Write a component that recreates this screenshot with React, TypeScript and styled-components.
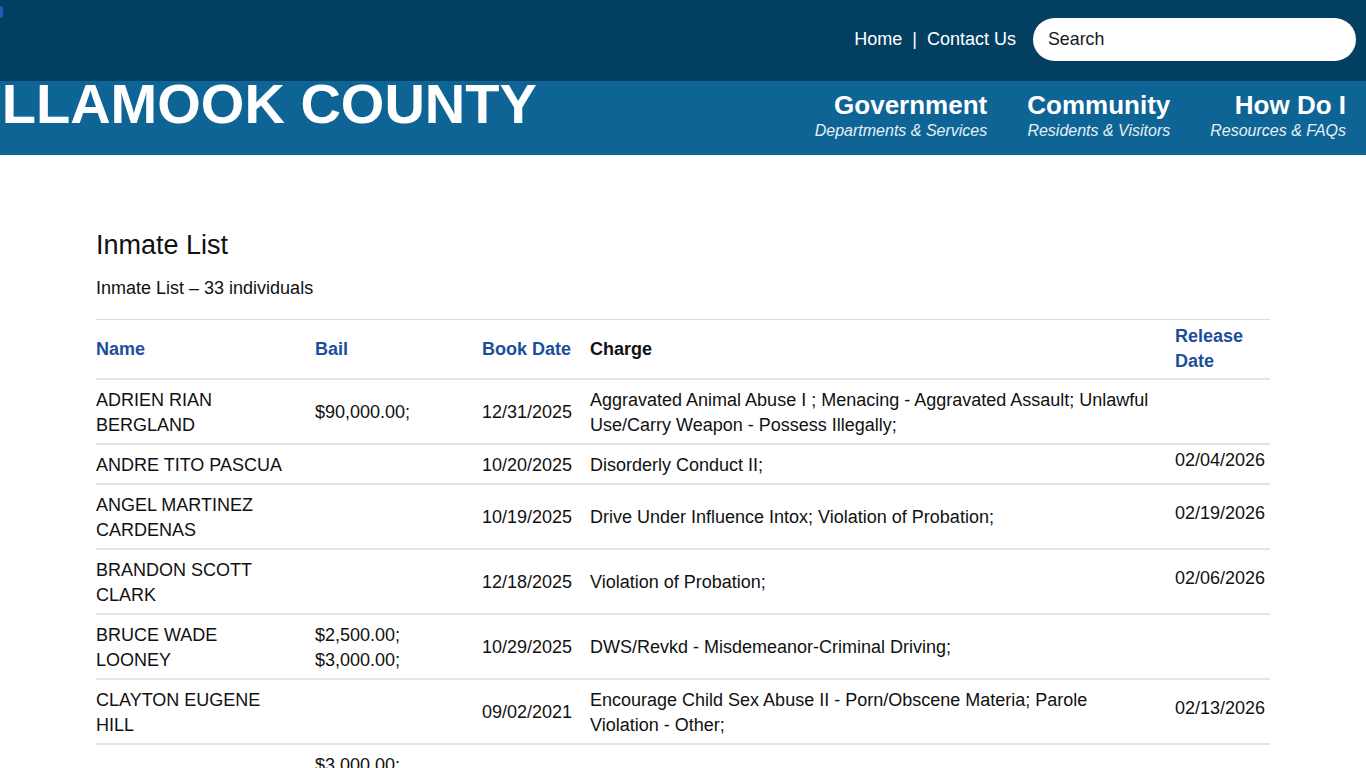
import React from "react";
import styled, { createGlobalStyle } from "styled-components";

const Global = createGlobalStyle`
  html, body { margin: 0; padding: 0; background: #ffffff; }
  body { font-family: "Liberation Sans", Arial, sans-serif; color: #111; }
  * { box-sizing: border-box; }
`;

const Page = styled.div`
  position: relative;
  width: 100%;
  min-height: 768px;
`;

const SkipMark = styled.span`
  position: absolute;
  left: 0;
  top: 6px;
  width: 3px;
  height: 12px;
  border-radius: 0 3px 3px 0;
  background: #2456c9;
  filter: blur(0.6px);
`;

const TopBar = styled.div`
  height: 81px;
  background: #033f61;
  display: flex;
  align-items: center;
  justify-content: flex-end;
  padding-right: 10px;
  gap: 17px;
`;

const Utility = styled.nav`
  display: flex;
  align-items: center;
  gap: 9px;
  font-size: 18px;
  color: #ffffff;
  margin-top: -3px;
`;

const UtilLink = styled.a`
  color: #ffffff;
  text-decoration: none;
`;

const Sep = styled.span`
  color: #ffffff;
  padding: 0 1px;
`;

const SearchBox = styled.div`
  width: 323px;
  height: 43px;
  border-radius: 22px;
  background: #ffffff;
  display: flex;
  align-items: center;
  padding-left: 15px;
  font-size: 17.8px;
  color: #1a1a1a;
  margin-top: -2px;
`;

const Band = styled.div`
  height: 74px;
  background: #0e6595;
  display: flex;
  align-items: flex-start;
  justify-content: space-between;
  overflow: hidden;
  padding-right: 20px;
`;

const Logo = styled.div`
  font-size: 56px;
  line-height: 56px;
  font-weight: 700;
  color: #ffffff;
  white-space: nowrap;
  margin-left: -48px;
  margin-top: -5px;
`;

const MainNav = styled.nav`
  display: flex;
  gap: 40px;
  padding-top: 10px;
`;

const NavItem = styled.a`
  display: flex;
  flex-direction: column;
  align-items: flex-end;
  text-decoration: none;
  color: #ffffff;
`;

const NavTitle = styled.span`
  font-size: 26px;
  line-height: 29px;
  font-weight: 700;
`;

const NavSub = styled.span`
  font-size: 16px;
  line-height: 22px;
  font-style: italic;
  color: #e6eff6;
`;

const Main = styled.main`
  width: 1174px;
  margin: 0 auto;
  padding-top: 74px;
`;

const Title = styled.h1`
  margin: 0;
  font-size: 27px;
  line-height: 32px;
  font-weight: 400;
  color: #111;
`;

const Summary = styled.p`
  margin: 15px 0 18px;
  font-size: 18px;
  line-height: 25px;
  color: #111;
`;

const Table = styled.table`
  width: 100%;
  table-layout: fixed;
  border-collapse: collapse;
  border-top: 1px solid #dedede;
  font-size: 18px;
  line-height: 25px;
`;

type Col = "name" | "bail" | "book" | "charge" | "release";

const padRight: Record<Col, number> = {
  name: 28,
  bail: 18,
  book: 12,
  charge: 22,
  release: 4,
};

const Row = styled.tr`
  border-bottom: 2px solid #e4e4e4;
`;

const Th = styled.th<{ $col: Col; $sortable?: boolean }>`
  text-align: left;
  vertical-align: middle;
  font-weight: 700;
  padding: 4px ${(p) => padRight[p.$col]}px 4px 0;
  color: ${(p) => (p.$sortable ? "#1b4f9c" : "#111")};
`;

const Td = styled.td<{ $col: Col }>`
  text-align: left;
  vertical-align: middle;
  color: #111;
  padding: ${(p) => (p.$col === "release" ? "3px" : "7.5px")}
    ${(p) => padRight[p.$col]}px
    ${(p) => (p.$col === "release" ? "10px" : "5.5px")} 0;
  white-space: ${(p) => (p.$col === "book" || p.$col === "release" ? "nowrap" : "normal")};
`;

const BailLine = styled.span`
  display: block;
`;

type Inmate = {
  name: string;
  bail: string[];
  book: string;
  charge: string;
  release: string;
};

const inmates: Inmate[] = [
  {
    name: "ADRIEN RIAN BERGLAND",
    bail: ["$90,000.00;"],
    book: "12/31/2025",
    charge:
      "Aggravated Animal Abuse I ; Menacing - Aggravated Assault; Unlawful Use/Carry Weapon - Possess Illegally;",
    release: "",
  },
  {
    name: "ANDRE TITO PASCUA",
    bail: [],
    book: "10/20/2025",
    charge: "Disorderly Conduct II;",
    release: "02/04/2026",
  },
  {
    name: "ANGEL MARTINEZ CARDENAS",
    bail: [],
    book: "10/19/2025",
    charge: "Drive Under Influence Intox; Violation of Probation;",
    release: "02/19/2026",
  },
  {
    name: "BRANDON SCOTT CLARK",
    bail: [],
    book: "12/18/2025",
    charge: "Violation of Probation;",
    release: "02/06/2026",
  },
  {
    name: "BRUCE WADE LOONEY",
    bail: ["$2,500.00;", "$3,000.00;"],
    book: "10/29/2025",
    charge: "DWS/Revkd - Misdemeanor-Criminal Driving;",
    release: "",
  },
  {
    name: "CLAYTON EUGENE HILL",
    bail: [],
    book: "09/02/2021",
    charge: "Encourage Child Sex Abuse II - Porn/Obscene Materia; Parole Violation - Other;",
    release: "02/13/2026",
  },
  {
    name: "CODY ALLEN MARSH",
    bail: ["$3,000.00;", "$5,000.00;", "$2,500.00;"],
    book: "11/14/2025",
    charge:
      "Violation of Probation; Tamper with Evidence; Fraudulent Use of a Credit Card; Theft II;",
    release: "",
  },
];

export default function App() {
  return (
    <Page>
      <Global />
      <SkipMark />
      <TopBar>
        <Utility>
          <UtilLink href="#">Home</UtilLink>
          <Sep>|</Sep>
          <UtilLink href="#">Contact Us</UtilLink>
        </Utility>
        <SearchBox>Search</SearchBox>
      </TopBar>
      <Band>
        <Logo>TILLAMOOK COUNTY</Logo>
        <MainNav>
          <NavItem href="#">
            <NavTitle>Government</NavTitle>
            <NavSub>Departments &amp; Services</NavSub>
          </NavItem>
          <NavItem href="#">
            <NavTitle>Community</NavTitle>
            <NavSub>Residents &amp; Visitors</NavSub>
          </NavItem>
          <NavItem href="#">
            <NavTitle>How Do I</NavTitle>
            <NavSub>Resources &amp; FAQs</NavSub>
          </NavItem>
        </MainNav>
      </Band>
      <Main>
        <Title>Inmate List</Title>
        <Summary>Inmate List – 33 individuals</Summary>
        <Table>
          <colgroup>
            <col style={{ width: 219 }} />
            <col style={{ width: 167 }} />
            <col style={{ width: 108 }} />
            <col style={{ width: 585 }} />
            <col style={{ width: 95 }} />
          </colgroup>
          <thead>
            <Row>
              <Th $col="name" $sortable>Name</Th>
              <Th $col="bail" $sortable>Bail</Th>
              <Th $col="book" $sortable>Book Date</Th>
              <Th $col="charge">Charge</Th>
              <Th $col="release" $sortable>Release Date</Th>
            </Row>
          </thead>
          <tbody>
            {inmates.map((m) => (
              <Row key={m.name}>
                <Td $col="name">{m.name}</Td>
                <Td $col="bail">
                  {m.bail.map((b, i) => (
                    <BailLine key={i}>{b}</BailLine>
                  ))}
                </Td>
                <Td $col="book">{m.book}</Td>
                <Td $col="charge">{m.charge}</Td>
                <Td $col="release">{m.release}</Td>
              </Row>
            ))}
          </tbody>
        </Table>
      </Main>
    </Page>
  );
}
